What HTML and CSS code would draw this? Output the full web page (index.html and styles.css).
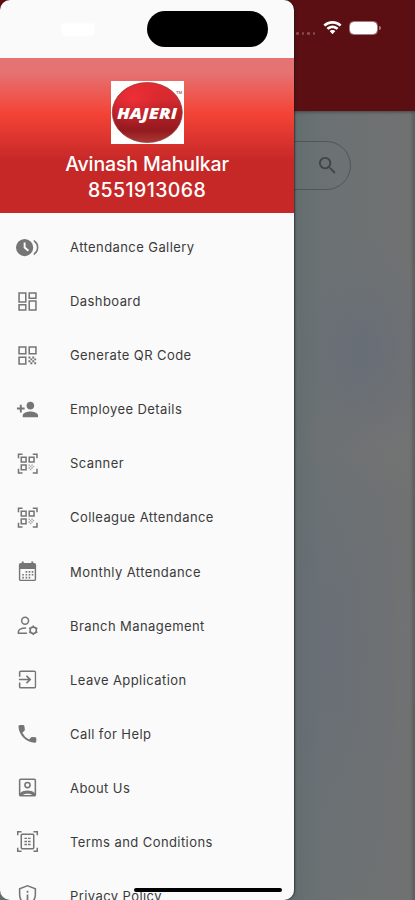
FILE: index.html
```html
<!DOCTYPE html>
<html lang="en">
<head>
<meta charset="utf-8">
<title>Hajeri</title>
<link rel="stylesheet" href="styles.css">
</head>
<body>
<div class="phone">
  <main class="page">
    <header class="appbar">
      <span class="signal"><i></i><i></i><i></i><i></i></span>
      <svg class="wifi" viewBox="0 0 20 15"><path d="M10 0C6.200 0 2.800 1.500.3 3.900l2 2.100C4.300 4.100 7 2.900 10 2.900S15.700 4.100 17.700 6l2-2.100C17.200 1.500 13.800 0 10 0zm0 4.900c-2.500 0-4.700 1-6.400 2.500l2 2.100C6.800 8.400 8.300 7.800 10 7.800s3.200.6 4.400 1.700l2-2.100C14.700 5.900 12.500 4.900 10 4.900zm0 4.700c-1.200 0-2.300.5-3.100 1.200L10 14.200l3.100-3.400c-.8-.7-1.900-1.200-3.100-1.200z"/></svg>
      <span class="battery"></span><span class="nub"></span>
    </header>
    <div class="search">
      <svg viewBox="0 0 24 24"><path d="M15.500 14h-.79l-.28-.27A6.471 6.471 0 0 0 16 9.500 6.500 6.500 0 1 0 9.500 16c1.610 0 3.090-.59 4.230-1.570l.27.28v.79l5 4.990L20.490 19l-4.990-5zm-6 0C7.010 14 5 11.990 5 9.500S7.010 5 9.500 5 14 7.010 14 9.500 11.990 14 9.500 14z"/></svg>
    </div>
  </main>

  <aside class="drawer">
    <div class="status"><span class="clock"></span><span class="island"></span></div>
    <div class="profile">
      <svg class="logo" viewBox="0 0 73 63">
        <defs>
          <linearGradient id="ball" x1="0" y1="0" x2="0" y2="1">
            <stop offset="0" stop-color="#e32b30"/><stop offset=".28" stop-color="#d42a30"/>
            <stop offset=".5" stop-color="#b52028"/><stop offset=".8" stop-color="#941a20"/><stop offset="1" stop-color="#a93a35"/>
          </linearGradient>
          <radialGradient id="shine" cx=".3" cy=".25" r=".5">
            <stop offset="0" stop-color="#f5303a" stop-opacity=".8"/><stop offset="1" stop-color="#e02830" stop-opacity="0"/>
          </radialGradient>
        </defs>
        <rect width="73" height="63" fill="#fff"/>
        <ellipse cx="36.300" cy="31.500" rx="35" ry="30" fill="url(#ball)" stroke="#9b3a3c" stroke-width=".8"/>
        <ellipse cx="36.300" cy="31.500" rx="34" ry="29" fill="url(#shine)"/>
        <text class="brand" x="6" y="38.200" textLength="60" lengthAdjust="spacingAndGlyphs">HAJERI</text>
        <text class="tm" x="65" y="13">TM</text>
      </svg>
      <div class="name">Avinash Mahulkar</div>
      <div class="number">8551913068</div>
    </div>
    <nav class="menu">
      <a class="item"><svg viewBox="0 0 24 24"><path fill-rule="evenodd" d="M9 3a9 9 0 1 0 0 18A9 9 0 0 0 9 3zm3.300 13.100L8 12.400V6.800h2v4.700l3.600 3.200z"/><path d="M18.500 4v2.100a7 7 0 0 1 0 11.800V20a9 9 0 0 0 0-16z"/></svg><span>Attendance Gallery</span></a>
      <a class="item"><svg class="outline" viewBox="0 0 24 24"><path d="M3.200 3.200h7v9.300h-7zM13.800 3.200h7v5.300h-7zM3.200 15.500h7v5.300h-7zM13.800 11.500h7v9.300h-7z"/></svg><span>Dashboard</span></a>
      <a class="item"><svg viewBox="0 0 24 24"><path class="line" d="M3.200 3.200h7v7h-7zM13.800 3.200h7v7h-7zM3.200 13.800h7v7h-7z"/><path d="M19 19h2v2h-2zM13 13h2v2h-2zM15 15h2v2h-2zM13 17h2v2h-2zM15 19h2v2h-2zM17 17h2v2h-2zM17 13h2v2h-2zM19 15h2v2h-2z"/></svg><span>Generate QR Code</span></a>
      <a class="item"><svg viewBox="0 0 24 24"><path d="M15 12c2.210 0 4-1.790 4-4s-1.790-4-4-4-4 1.790-4 4 1.790 4 4 4zm-9-2V7H4v3H1v2h3v3h2v-3h3v-2H6zm9 4c-2.670 0-8 1.340-8 4v2h16v-2c0-2.660-5.330-4-8-4z"/></svg><span>Employee Details</span></a>
      <a class="item"><svg viewBox="0 0 24 24"><path class="line" d="M5.500 5.500h5v5h-5zM13.800 5.500h5v5h-5zM5.500 13.500h5v5h-5zM2.600 6.500V2.300h4.200M17.500 2.300h4.400v4.200M2.600 17.500v4.300h4.200M17.500 21.800h4.400v-4.300"/><path class="dots" d="M13 13h1.500v1.500H13V13zm1.500 1.500H16V16h-1.500v-1.500zM16 13h1.500v1.500H16V13zm-3 3h1.500v1.500H13V16zm1.500 1.500H16V19h-1.500v-1.500zM16 16h1.500v1.500H16V16zm1.500-1.500H19V16h-1.500v-1.500z"/></svg><span>Scanner</span></a>
      <a class="item"><svg viewBox="0 0 24 24"><path class="line" d="M5.500 5.500h5v5h-5zM13.800 5.500h5v5h-5zM5.500 13.500h5v5h-5zM2.600 6.500V2.300h4.200M17.500 2.300h4.400v4.200M2.600 17.500v4.300h4.200M17.500 21.800h4.400v-4.300"/><path class="dots" d="M13 13h1.500v1.500H13V13zm1.500 1.500H16V16h-1.500v-1.500zM16 13h1.500v1.500H16V13zm-3 3h1.500v1.500H13V16zm1.500 1.500H16V19h-1.500v-1.500zM16 16h1.500v1.500H16V16zm1.500-1.500H19V16h-1.500v-1.500z"/></svg><span>Colleague Attendance</span></a>
      <a class="item"><svg viewBox="0 0 24 24"><path fill-rule="evenodd" d="M5 3h1V1.500h2V3h8V1.500h2V3h1a2 2 0 0 1 2 2v15a2 2 0 0 1-2 2H5a2 2 0 0 1-2-2V5a2 2 0 0 1 2-2zm-.5 6.500V20c0 .4.200.6.600.6h13.800c.4 0 .6-.2.6-.6V9.500z"/><path d="M10 11.500h1.700v1.700H10zM13.200 11.500h1.700v1.700h-1.700zM16.400 11.500h1.700v1.700h-1.700zM6.500 14.500h1.700v1.700H6.500zM10 14.500h1.700v1.700H10zM13.200 14.500h1.700v1.700h-1.700zM16.400 14.500h1.700v1.700h-1.700zM6.500 17.500h1.700v1.700H6.500zM10 17.500h1.700v1.700H10zM13.200 17.500h1.700v1.700h-1.700z"/></svg><span>Monthly Attendance</span></a>
      <a class="item"><svg class="outline" viewBox="0 0 24 24"><circle cx="9.500" cy="7" r="3.600"/><path d="M11.500 20H2.500v-1.500c0-2 2.500-3.800 8-3.800"/><circle cx="18" cy="17" r="3.300"/><path d="M18 12v1.500M18 20.500V22M13.700 14.500l1.300.8M21 18.700l1.300.8M13.700 19.500l1.300-.8M21 15.300l1.300-.8"/></svg><span>Branch Management</span></a>
      <a class="item"><svg viewBox="0 0 24 24"><path d="M19 2.500H5a2 2 0 0 0-2 2V9h1.600V4.100h15v15.700h-15V15H3v4.500a2 2 0 0 0 2 2h14a2 2 0 0 0 2-2v-15a2 2 0 0 0-2-2zM11.500 16.500L16 12l-4.500-4.500-1.200 1.200 2.400 2.450H3v1.700h9.700l-2.400 2.450z"/></svg><span>Leave Application</span></a>
      <a class="item"><svg viewBox="0 0 24 24"><path d="M20.300 16l-3.200-.4a1.500 1.500 0 0 0-1.300.4l-2.200 2.200a15 15 0 0 1-7-7l2.200-2.200c.4-.3.500-.8.400-1.300L8.800 4.500A1.500 1.500 0 0 0 7.300 3.200H4.200c-1 0-1.700.8-1.600 1.700.6 9 7.900 16.200 16.900 16.800.9.100 1.700-.7 1.700-1.600v-2.700c.1-.7-.3-1.300-.9-1.400z"/></svg><span>Call for Help</span></a>
      <a class="item"><svg viewBox="0 0 24 24"><path fill-rule="evenodd" d="M5 2.500h14a2 2 0 0 1 2 2v15a2 2 0 0 1-2 2H5a2 2 0 0 1-2-2v-15a2 2 0 0 1 2-2zm-.4 1.600v13.600C6.500 16.100 9 15.200 12 15.200s5.500.9 7.400 2.500V4.100zM7 19.900h10c-1.300-1-3-1.500-5-1.500s-3.700.5-5 1.500zM12 6a3.500 3.500 0 1 1 0 7 3.500 3.500 0 0 1 0-7zm0 1.600a1.900 1.900 0 1 0 0 3.800 1.900 1.900 0 0 0 0-3.800z"/></svg><span>About Us</span></a>
      <a class="item"><svg viewBox="0 0 24 24"><path class="line" d="M6.500 4.500h11a1 1 0 0 1 1 1v13a1 1 0 0 1-1 1h-11a1 1 0 0 1-1-1v-13a1 1 0 0 1 1-1zM1.800 5.500V1.800h4M18.200 1.800h4v3.700M1.800 18.500v3.700h4M18.200 22.200h4v-3.700"/><path d="M8.800 8h2.700v1.500H8.800zM12.500 8h2.700v1.500h-2.700zM8.800 11.200h2.700v1.500H8.800zM12.500 11.200h2.700v1.500h-2.700zM8.800 14.400h2.700v1.500H8.800zM12.500 14.400h2.700v1.500h-2.700z"/></svg><span>Terms and Conditions</span></a>
      <a class="item"><svg viewBox="0 0 24 24"><path fill-rule="evenodd" d="M12 1L3 4.500V11c0 5.600 3.900 10.700 9 12 5.100-1.300 9-6.400 9-12V4.500zm7.400 10c0 4.500-3.100 8.900-7.400 10.300C7.700 19.900 4.600 15.500 4.600 11V5.600L12 2.700l7.400 2.900z"/><path d="M11.100 7h1.800v2h-1.800zM11.100 11h1.800v6h-1.800z"/></svg><span>Privacy Policy</span></a>
    </nav>
  </aside>
  <div class="home-bar"></div>
</div>
</body>
</html>
```
FILE: styles.css
```css
* { box-sizing: border-box; }
body { margin: 0; font-family: Inter, "Liberation Sans", sans-serif; }
.phone { position: relative; width: 415px; height: 900px; overflow: hidden; }

.page {
  height: 100%;
  background:
    linear-gradient(90deg, transparent 410px, rgba(55, 60, 60, .4) 415px),
    radial-gradient(ellipse 75px 110px at 365px 350px, rgba(101, 108, 122, .6), transparent),
    radial-gradient(ellipse 90px 60px at 385px 440px, rgba(115, 115, 115, .8), transparent),
    radial-gradient(ellipse 85px 260px at 330px 650px, rgba(104, 109, 121, .55), transparent),
    linear-gradient(90deg, #636d6e 294px, #6b7173 318px, #707272 400px);
}
.appbar {
  display: flex;
  align-items: flex-start;
  height: 111px;
  padding: 21px 0 0 296px;
  background: #5c0f12;
  box-shadow: 0 1px 3px rgba(40, 30, 30, .55);
}
.signal { display: flex; gap: 3px; width: 27px; padding-top: 11px; }
.signal i { width: 2.500px; height: 3px; border-radius: 1px; background: #854a4d; }
.wifi { width: 19px; height: 14px; fill: #fff; }
.battery {
  width: 29px;
  height: 14px;
  margin: 0 1px 0 7px;
  border: 1px solid #a77c7e;
  border-radius: 4.500px;
  background: #fff content-box;
}
.nub { width: 2px; height: 4px; margin-top: 5px; border-radius: 0 2px 2px 0; background: #a77c7e; }
.search {
  display: flex;
  align-items: center;
  justify-content: flex-end;
  width: 341px;
  height: 49px;
  margin: 30px 0 0 10px;
  padding-right: 11px;
  border: 1px solid #505556;
  border-radius: 25px;
}
.search svg { width: 23px; height: 23px; fill: #414546; }

.drawer {
  position: absolute;
  inset: 0 auto 0 0;
  width: 294px;
  overflow: hidden;
  border-radius: 10px;
  background: #fafafa;
}
.phone::before {
  content: "";
  position: absolute;
  inset: 0 auto 0 0;
  width: 294px;
  border-radius: 10px;
  box-shadow: 1px 0 2px rgba(20, 25, 25, .65);
}
.status { display: flex; justify-content: space-between; height: 58px; padding: 11px 26px 0 61px; }
.clock { width: 34px; height: 13px; margin-top: 12px; border-radius: 5px; background: #fff; filter: blur(1px); }
.island { width: 121px; height: 36px; border-radius: 18px; background: #000; }
.profile {
  display: flex;
  flex-direction: column;
  align-items: center;
  height: 155px;
  padding-top: 23px;
  background: linear-gradient(#e57373 9%, #f44336 36%, #c62828 66%);
  color: #fff;
  font-size: 19.500px;
  font-weight: 500;
  line-height: 26px;
}
.logo { width: 73px; height: 63px; margin-bottom: 7px; flex: none; }
.brand { fill: #fff; font: italic 800 16px "Open Sans", sans-serif; }
.tm { fill: #a75559; font-size: 4px; }
.name { letter-spacing: -.12px; }
.number { letter-spacing: .4px; }

.menu { padding-top: 7px; }
.item {
  display: flex;
  align-items: center;
  height: 54.080px;
  padding-left: 16px;
  color: #3a3a3a;
  font-size: 13px;
  letter-spacing: .42px;
  white-space: nowrap;
}
.item svg { width: 23px; height: 23px; margin-right: 31px; fill: #757575; flex: none; }
.item .outline, .item .line { fill: none; stroke: #757575; stroke-width: 1.600; }
.item .dots { opacity: .6; }
.home-bar {
  position: absolute;
  left: 134px;
  top: 888px;
  width: 148px;
  height: 4px;
  border-radius: 2px;
  background: #000;
}
```
